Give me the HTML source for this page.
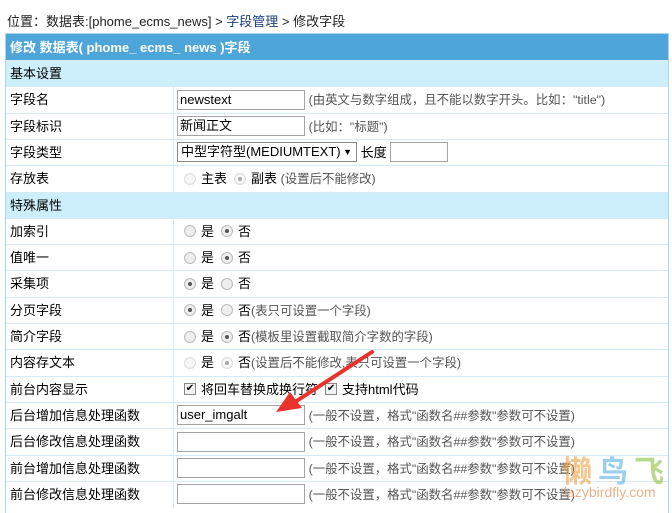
<!DOCTYPE html>
<html><head><meta charset="utf-8"><style>
*{margin:0;padding:0;box-sizing:border-box}
body{width:672px;height:502px;overflow:hidden;background:#fff;font-family:"Liberation Sans","Noto Sans CJK SC",sans-serif;font-size:12px;color:#000;position:relative}
.pos{position:absolute;left:7px;top:11px;font-size:13px;color:#222}
.pos a{color:#1a3c7a}
.tbl{position:absolute;left:5px;top:33px;width:664px;height:480px;border-left:1px solid #a9d6ee;border-right:1px solid #a9d6ee}
.hd{position:absolute;left:0;top:0;width:100%;height:27px;background:#4ea5d9;color:#fff;font-weight:bold;font-size:13px;line-height:27px;padding-left:4px;border-top:1px solid #a9d6ee}
.r{position:absolute;left:0;width:100%;height:27px;border-top:1px solid #d6ebf5;line-height:25px}
.sec{background:#cdeefb;padding-left:4px;font-size:13px}
.l{position:absolute;left:4px;top:0;font-size:13px}
.v{position:absolute;left:167px;top:0;height:100%;border-left:1px solid #d6ebf5;padding-left:3px;white-space:nowrap;font-size:13px}
.in{display:inline-block;vertical-align:middle;width:128px;height:20px;border:1px solid #a5a5a5;background:#fff;font-size:13px;line-height:18px;padding-left:2px;margin-top:-2px}
.g{color:#555;font-size:12.4px}
.rd{display:inline-block;width:12px;height:12px;border-radius:50%;border:1px solid #bbb;background:#eee;vertical-align:middle;margin:0 5px 0 7px;position:relative;top:-1px}
.rd.on::after{content:"";position:absolute;left:3px;top:3px;width:4px;height:4px;border-radius:50%;background:#555}
.rd.dis{opacity:.5}
.cb{display:inline-block;width:12px;height:12px;border:1px solid #888;background:#f2f2f2;vertical-align:middle;margin:0 5px 0 7px;position:relative;top:-1px;font-size:10px;line-height:10px;text-align:center}
.sel{display:inline-block;vertical-align:middle;width:180px;height:20px;border:1px solid #888;font-size:13px;line-height:18px;padding-left:3px;margin-top:-2px;position:relative}
</style></head><body>
<div class="pos">位置：数据表:[phome_ecms_news] &gt; <a>字段管理</a> &gt; 修改字段</div>
<div class="tbl">
<div class="hd">修改 数据表( phome_ ecms_ news )字段</div>
<div class="r sec" style="top:27px">基本设置</div>
<div class="r" style="top:53.3px"><span class="l">字段名</span><span class="v"><span class="in">newstext</span> <span class="g">(由英文与数字组成，且不能以数字开头。比如："title")</span></span></div>
<div class="r" style="top:79.6px"><span class="l">字段标识</span><span class="v"><span class="in">新闻正文</span> <span class="g">(比如："标题")</span></span></div>
<div class="r" style="top:105.9px"><span class="l">字段类型</span><span class="v"><span class="sel">中型字符型(MEDIUMTEXT)<span style="position:absolute;right:4px;font-size:9px">▼</span></span> 长度 <span class="in" style="width:58px"></span></span></div>
<div class="r" style="top:132.2px"><span class="l">存放表</span><span class="v"><span class="rd dis"></span>主表<span class="rd on dis"></span>副表 <span class="g">(设置后不能修改)</span></span></div>
<div class="r sec" style="top:158.5px">特殊属性</div>
<div class="r" style="top:184.8px"><span class="l">加索引</span><span class="v"><span class="rd"></span>是<span class="rd on"></span>否</span></div>
<div class="r" style="top:211.1px"><span class="l">值唯一</span><span class="v"><span class="rd"></span>是<span class="rd on"></span>否</span></div>
<div class="r" style="top:237.4px"><span class="l">采集项</span><span class="v"><span class="rd on"></span>是<span class="rd"></span>否</span></div>
<div class="r" style="top:263.7px"><span class="l">分页字段</span><span class="v"><span class="rd on"></span>是<span class="rd"></span>否<span class="g">(表只可设置一个字段)</span></span></div>
<div class="r" style="top:290px"><span class="l">简介字段</span><span class="v"><span class="rd"></span>是<span class="rd on"></span>否<span class="g">(模板里设置截取简介字数的字段)</span></span></div>
<div class="r" style="top:316.3px"><span class="l">内容存文本</span><span class="v"><span class="rd dis"></span>是<span class="rd on dis"></span>否<span class="g">(设置后不能修改,表只可设置一个字段)</span></span></div>
<div class="r" style="top:342.6px"><span class="l">前台内容显示</span><span class="v"><span class="cb">✔</span>将回车替换成换行符<span class="cb">✔</span>支持html代码</span></div>
<div class="r" style="top:368.9px"><span class="l">后台增加信息处理函数</span><span class="v"><span class="in">user_imgalt</span> <span class="g">(一般不设置，格式"函数名##参数"参数可不设置)</span></span></div>
<div class="r" style="top:395.2px"><span class="l">后台修改信息处理函数</span><span class="v"><span class="in"></span> <span class="g">(一般不设置，格式"函数名##参数"参数可不设置)</span></span></div>
<div class="r" style="top:421.5px"><span class="l">前台增加信息处理函数</span><span class="v"><span class="in"></span> <span class="g">(一般不设置，格式"函数名##参数"参数可不设置)</span></span></div>
<div class="r" style="top:447.8px"><span class="l">前台修改信息处理函数</span><span class="v"><span class="in"></span> <span class="g">(一般不设置，格式"函数名##参数"参数可不设置)</span></span></div>
</div>
<svg style="position:absolute;left:0;top:0" width="672" height="502">
<line x1="372" y1="352" x2="295" y2="402" stroke="#e8322e" stroke-width="4" stroke-linecap="round"/>
<polygon points="276,412 290,392 302,408" fill="#e8322e"/>
</svg>
<div style="position:absolute;left:562px;top:452px;font-size:30px;font-weight:bold;letter-spacing:6px;opacity:.6;font-family:'Noto Sans CJK SC',sans-serif;line-height:34px"><span style="color:#f0a040">懒</span><span style="color:#5ab0e0">鸟</span><span style="color:#8cc040">飞</span></div>
<div style="position:absolute;left:564px;top:484px;font-size:14px;color:#e0a070;opacity:.8">lazybirdfly.com</div>
</body></html>
